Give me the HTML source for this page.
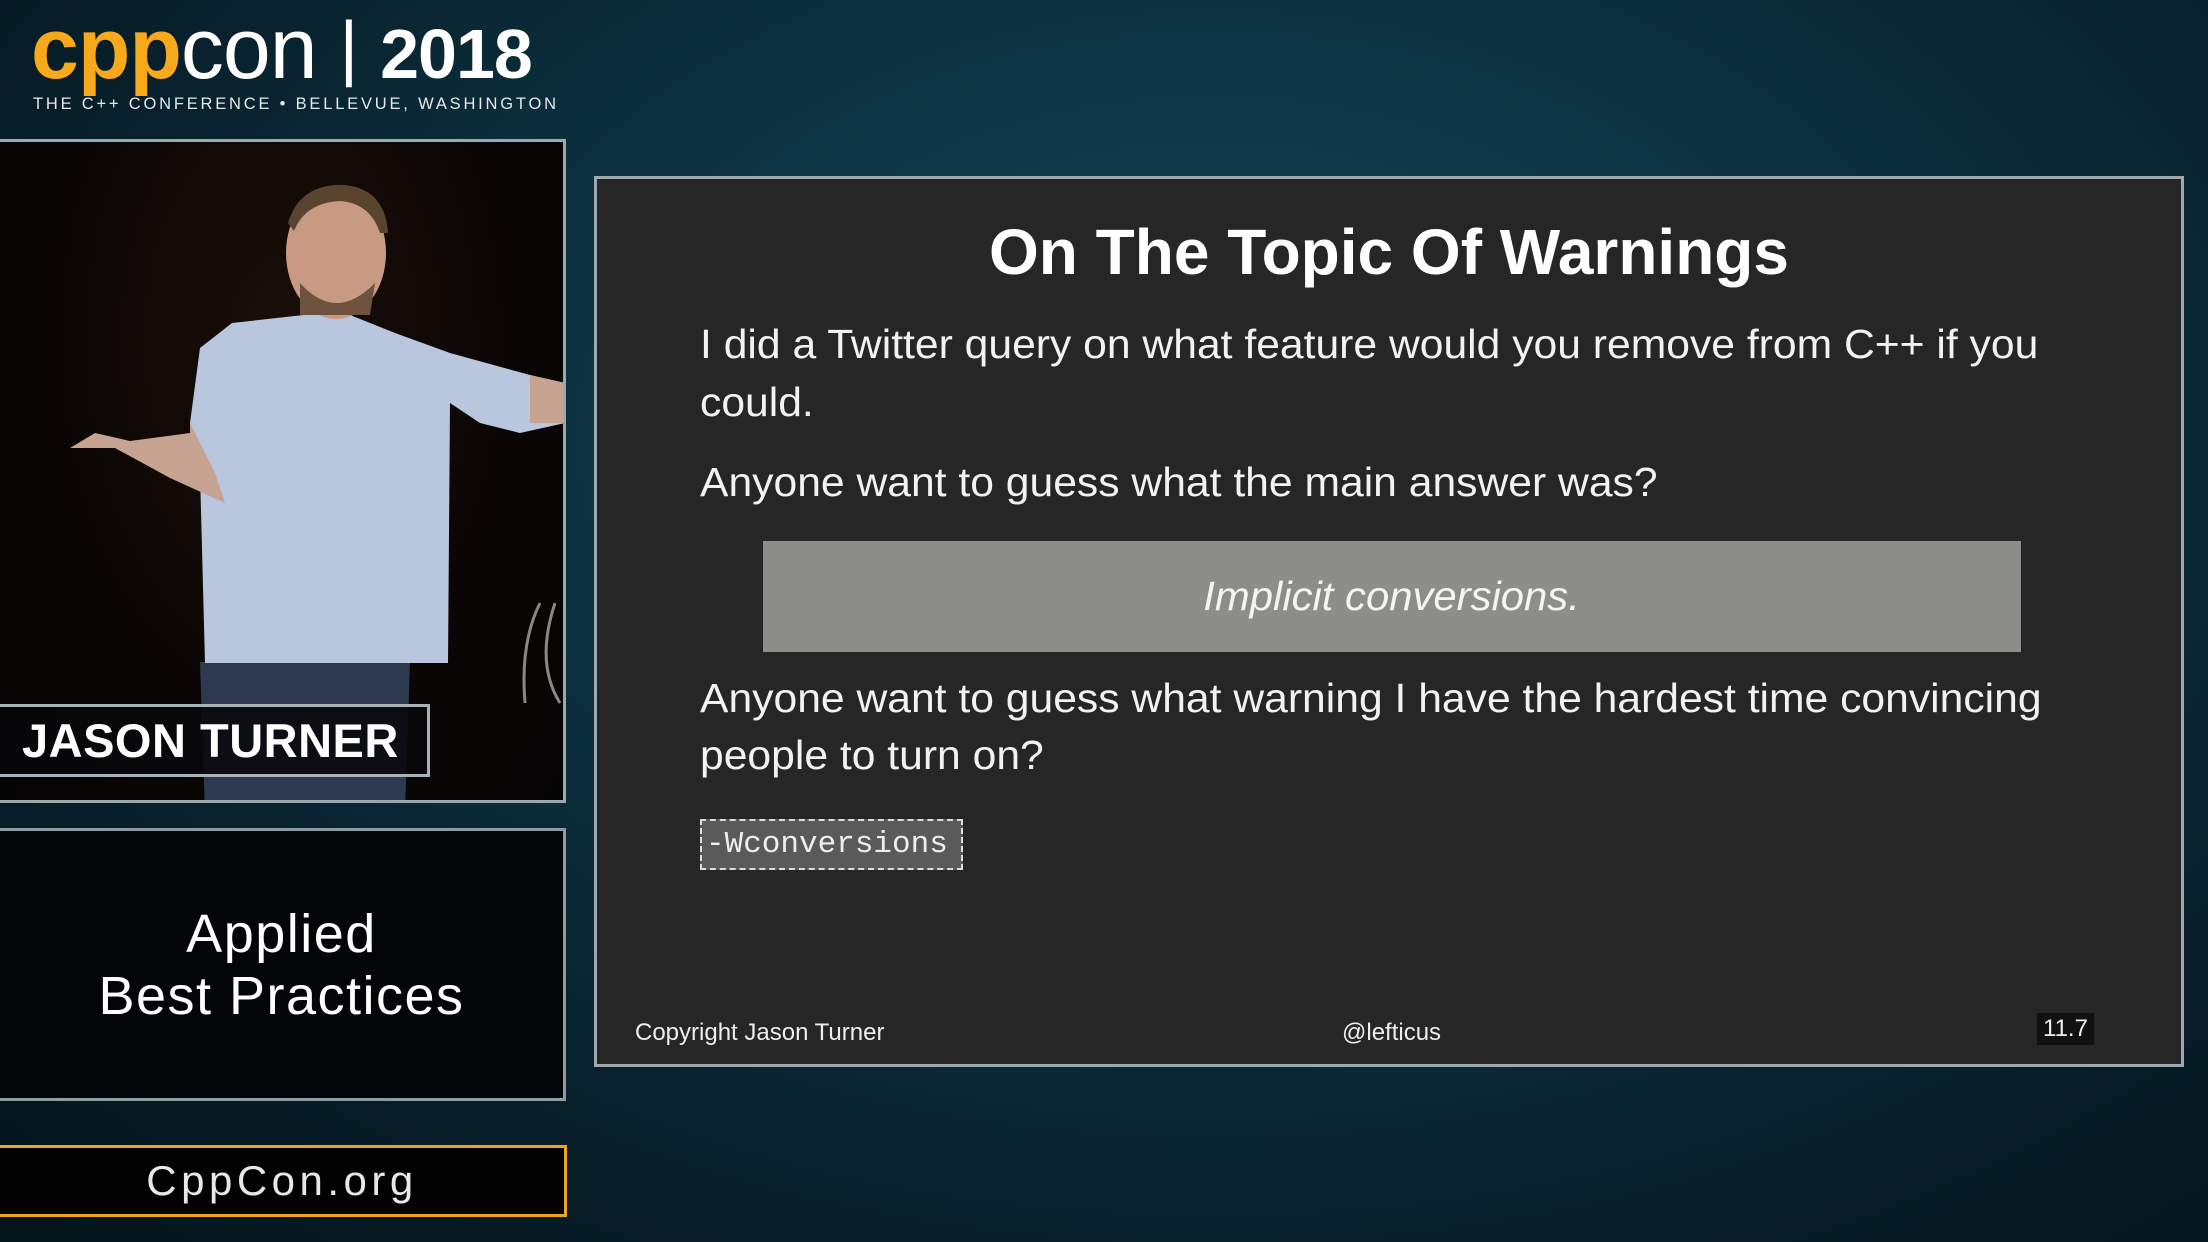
<!DOCTYPE html>
<html><head><meta charset="utf-8"><style>
*{margin:0;padding:0;box-sizing:border-box}
body{width:2208px;height:1242px;overflow:hidden;position:relative;
background:radial-gradient(ellipse at 55% 35%,#15485a 0%,#0c3140 40%,#071d27 75%,#04141b 100%);
font-family:"Liberation Sans",sans-serif;color:#fff}
.abs{position:absolute}
.logo{left:31px;top:6px;font-size:86px;white-space:nowrap;line-height:1;letter-spacing:-1px}
.sub{left:33px;top:95px;font-size:16.5px;letter-spacing:2.8px;color:#e4e8ea;white-space:nowrap}
.video{left:-3px;top:139px;width:569px;height:664px;border:3px solid #9aa8b0;background:radial-gradient(ellipse at 50% 30%,#1a0e08 0%,#0a0605 60%,#050404 100%);overflow:hidden}
.name{left:-3px;top:704px;width:433px;height:73px;border:3px solid #a8b2b8;background:rgba(8,8,10,.88);font-weight:bold;font-size:47px;padding-left:22px;line-height:67px;letter-spacing:.5px}
.tbox{left:-3px;top:828px;width:569px;height:273px;border:3px solid #8d9ba3;background:#030508;text-align:center;font-size:54px;letter-spacing:1.5px;line-height:62px;padding-top:72px}
.org{left:-3px;top:1145px;width:570px;height:72px;border:3px solid #f0a31c;background:#010102;text-align:center;font-size:42px;letter-spacing:4.5px;line-height:66px;color:#e8e8e8}
.slide{left:594px;top:176px;width:1590px;height:891px;border:3px solid #9fa9ad;background:#262626}
.title{position:absolute;left:0;width:100%;top:36px;text-align:center;font-weight:bold;font-size:64px}
.ln{position:absolute;left:103px;font-size:41px;white-space:nowrap;transform:scaleX(1.04);transform-origin:left center;color:#f2f2f2}
.gray{position:absolute;left:166px;top:362px;width:1258px;height:111px;background:#8d8e8a;text-align:center;font-style:italic;font-size:41px;line-height:111px;color:#f4f4f4}
.gray span{display:inline-block;transform:scaleX(1.02)}
.code{position:absolute;left:103px;top:640px;width:263px;height:51px;border:2px dashed #ddd;background:#5a5a5a;font-family:"Liberation Mono",monospace;font-size:31px;line-height:47px;padding-left:4px;color:#eee}
.foot{position:absolute;top:840px;font-size:24px;color:#eee;white-space:nowrap}
</style></head><body>
<div class="abs logo"><span style="color:#f7a81b;font-weight:bold">cpp</span><span style="font-weight:normal">con</span> <span style="font-weight:300;font-size:72px;position:relative;top:-6px">|</span> <span style="font-weight:bold;font-size:70px">2018</span></div>
<div class="abs sub">THE C++ CONFERENCE • BELLEVUE, WASHINGTON</div>

<div class="abs video">
<svg width="569" height="664" viewBox="0 139 569 664" style="position:absolute;left:0;top:0">
<path d="M200 659 L410 659 L405 810 L205 810Z" fill="#2c3950"/>
<path d="M232 320 L340 308 L395 330 L450 350 L530 372 L565 380 L565 420 L520 430 L480 420 L450 400 L448 660 L205 660 L200 470 L190 420 L200 345Z" fill="#b8c6de"/>
<path d="M190 420 L215 470 L225 500 L170 475 L115 445 L70 445 L95 430 L130 438 L190 430Z" fill="#c7a391"/>
<path d="M530 372 L565 380 L565 420 L530 420Z" fill="#c7a391"/>
<ellipse cx="336" cy="250" rx="50" ry="66" fill="#c99a82"/>
<path d="M288 220 Q300 180 345 182 Q385 186 388 230 L380 230 Q370 200 340 198 Q305 200 294 228Z" fill="#5a4430"/>
<path d="M300 280 Q336 320 375 280 L370 312 L300 312Z" fill="#6d5240"/>
<path d="M540 600 Q520 640 525 700 M555 600 Q535 660 560 700" stroke="#888" stroke-width="3" fill="none"/>
</svg>
</div>
<div class="abs name">JASON TURNER</div>
<div class="abs tbox">Applied<br>Best Practices</div>
<div class="abs org">CppCon.org</div>

<div class="abs slide">
<div class="title">On The Topic Of Warnings</div>
<div class="ln" style="top:142px">I did a Twitter query on what feature would you remove from C++ if you</div>
<div class="ln" style="top:200px">could.</div>
<div class="ln" style="top:280px">Anyone want to guess what the main answer was?</div>
<div class="gray"><span>Implicit conversions.</span></div>
<div class="ln" style="top:496px">Anyone want to guess what warning I have the hardest time convincing</div>
<div class="ln" style="top:553px">people to turn on?</div>
<div class="code">-Wconversions</div>
<div class="foot" style="left:38px">Copyright Jason Turner</div>
<div class="foot" style="left:745px">@lefticus</div>
<div class="foot" style="left:1440px;top:834px;background:#111;padding:2px 6px">11.7</div>
</div>
</body></html>
